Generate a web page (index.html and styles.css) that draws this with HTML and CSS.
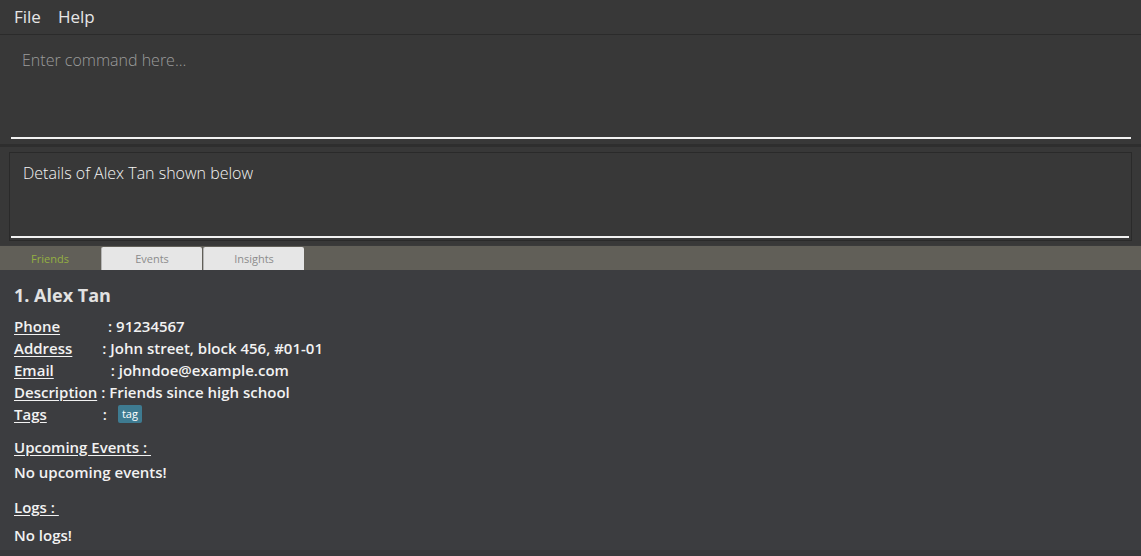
FILE: index.html
```html
<!DOCTYPE html>
<html>
<head>
<meta charset="utf-8">
<link rel="stylesheet" href="styles.css">
</head>
<body>
<div class="app">
  <div class="menubar">
    <span class="menu-item">File</span>
    <span class="menu-item">Help</span>
  </div>
  <div class="command">
    <div class="command-field">
      <span class="placeholder">Enter command here...</span>
    </div>
  </div>
  <div class="divider"></div>
  <div class="result">
    <div class="result-box">
      <div class="result-field">Details of Alex Tan shown below</div>
    </div>
  </div>
  <div class="tabbar">
    <div class="tab tab-active">Friends</div>
    <div class="tab">Events</div>
    <div class="tab">Insights</div>
  </div>
  <div class="content">
    <div class="name">1. Alex Tan</div>
    <div class="rows">
      <div class="row"><span class="label">Phone</span><span class="value v-phone">: 91234567</span></div>
      <div class="row"><span class="label">Address</span><span class="value v-address">: John street, block 456, #01-01</span></div>
      <div class="row"><span class="label">Email</span><span class="value v-email">: johndoe@example.com</span></div>
      <div class="row"><span class="label">Description</span><span class="value v-desc">: Friends since high school</span></div>
      <div class="row"><span class="label">Tags</span><span class="value v-tags">:</span><span class="tag">tag</span></div>
    </div>
    <div class="section-title">Upcoming Events :&nbsp;</div>
    <div class="section-text">No upcoming events!</div>
    <div class="section-title logs">Logs :&nbsp;</div>
    <div class="section-text last">No logs!</div>
  </div>
  <div class="footer"></div>
</div>
</body>
</html>
```

FILE: styles.css
```css
* { box-sizing: border-box; }
html, body {
  margin: 0;
  padding: 0;
  background: #383838;
  font-family: "Open Sans", "Noto Sans", sans-serif;
}
.app {
  width: 1141px;
  height: 556px;
  display: flex;
  flex-direction: column;
  overflow: hidden;
}
.menubar {
  height: 35px;
  display: flex;
  align-items: center;
  gap: 17px;
  padding: 0 0 0 14px;
  border-bottom: 1px solid #2b2b2b;
  background: #383838;
}
.menu-item {
  color: #e6e6e6;
  font-size: 17px;
  line-height: 1;
  padding-bottom: 1px;
}
.command {
  height: 109px;
  padding: 0 10px 0 11px;
  background: #383838;
}
.command-field {
  height: 104px;
  border-bottom: 2px solid #f2f2f2;
  padding: 14px 0 0 11px;
}
.placeholder {
  color: #9c9c9c;
  font-size: 16px;
  font-weight: 300;
}
.divider {
  height: 3px;
  background: #2e2e2e;
}
.result {
  height: 98px;
  padding: 5px 9px 0 9px;
  background: #383838;
}
.result-box {
  height: 89px;
  border: 1px solid #2a2a2a;
  padding: 0 2px 0 1px;
}
.result-field {
  height: 85px;
  border-bottom: 2px solid #f2f2f2;
  padding: 9px 0 0 12px;
  color: #f4f4f4;
  font-size: 16px;
  font-weight: 300;
}
.tabbar {
  height: 25px;
  background: #615f58;
  display: flex;
  align-items: flex-end;
  border-top: 1px solid #3a3a3a;
}
.tab {
  width: 101px;
  height: 23px;
  display: flex;
  align-items: center;
  justify-content: center;
  font-size: 11px;
  color: #8c8c8c;
  background: #e6e6e6;
  border-radius: 2px 2px 0 0;
  margin-right: 1px;
  border-left: 1px solid #b5b5b5;
}
.tab-active {
  width: 100px;
  background: transparent;
  color: #94b042;
  border-left: none;
}
.content {
  flex: 1;
  background: #3c3d40;
  padding: 13px 14px 0 14px;
  color: #f2f2f2;
}
.name {
  font-size: 18px;
  font-weight: 700;
  color: #e2e2e2;
  line-height: 24px;
  margin-bottom: 8px;
}
.rows {
  display: flex;
  flex-direction: column;
}
.row {
  height: 22px;
  display: flex;
  align-items: center;
  font-size: 15px;
  font-weight: 600;
}
.label {
  text-decoration: underline;
  text-underline-offset: 2px;
}
.v-phone { margin-left: 48px; }
.v-address { margin-left: 30px; }
.v-email { margin-left: 57px; }
.v-desc { margin-left: 4px; }
.v-tags { margin-left: 56px; }
.tag {
  margin-left: 11px;
  background: #3e7b91;
  color: #ffffff;
  font-size: 11px;
  font-weight: 400;
  padding: 1px 4px 2px;
  border-radius: 2px;
  line-height: 15px;
}
.section-title {
  margin-top: 11px;
  font-size: 15px;
  font-weight: 600;
  text-decoration: underline;
  text-underline-offset: 2px;
  line-height: 22px;
}
.section-title.logs { margin-top: 12px; }
.section-text {
  font-size: 15px;
  font-weight: 600;
  line-height: 24px;
  margin-top: 2px;
}
.section-text.last { margin-top: 5px; }
.footer {
  height: 6px;
  background: #36373a;
}
```
